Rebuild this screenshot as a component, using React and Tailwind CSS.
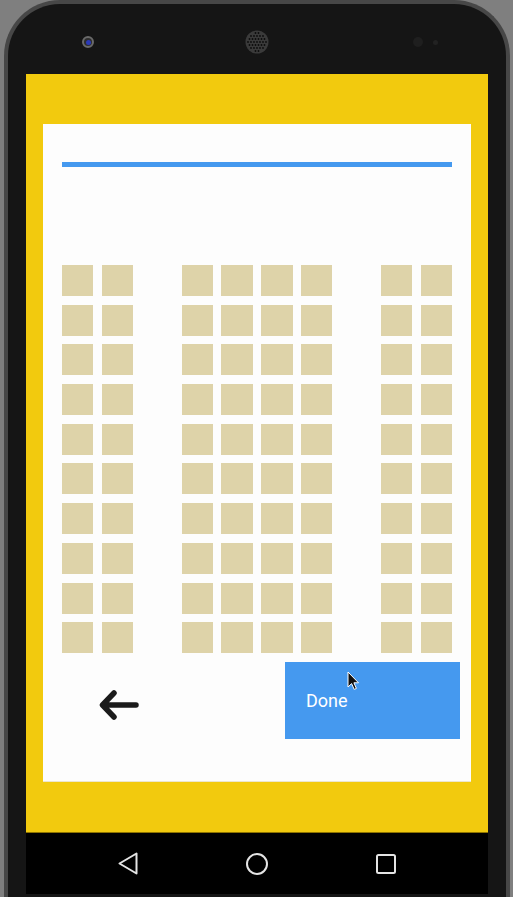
import React from "react";

const ROWS = 10;
const AISLES = [2, 7];

function Seat() {
  return <div className="h-[31px] bg-[#ded3a9]" />;
}

function SeatMap() {
  const cells = [];
  for (let r = 0; r < ROWS; r++) {
    for (let c = 0; c < 10; c++) {
      cells.push(
        AISLES.includes(c) ? <div key={r + "-" + c} /> : <Seat key={r + "-" + c} />
      );
    }
  }
  return <div className="grid grid-cols-10 gap-x-[8.7px] gap-y-[8.7px]">{cells}</div>;
}

function Grille() {
  const dots = [];
  for (let y = -9; y <= 9; y += 3) {
    for (let x = -9; x <= 9; x += 3) {
      const ox = (Math.round(y / 3) % 2) * 1.5;
      if ((x + ox) * (x + ox) + y * y < 95) dots.push(<circle key={x + "," + y} cx={12 + x + ox} cy={12 + y} r="0.9" fill="#0c0c0c" />);
    }
  }
  return (
    <svg width="24" height="24" viewBox="0 0 24 24">
      <circle cx="12" cy="12" r="11.5" fill="#3a3a3a" />
      {dots}
    </svg>
  );
}

function PhoneTop() {
  return (
    <div className="h-[70px] flex items-center pt-[6px]">
      <div className="ml-[56px] w-[12px] h-[12px] rounded-full bg-[#2e2e2e] border-[2px] border-[#6a6a6a] flex items-center justify-center">
        <div className="w-[5px] h-[5px] rounded-full bg-[#2b3ab8]" />
      </div>
      <div className="ml-[151px]">
        <Grille />
      </div>
      <div className="ml-[144px] w-[10px] h-[10px] rounded-full bg-[#1f1f1f]" />
      <div className="ml-[10px] w-[5px] h-[5px] rounded-full bg-[#222222]" />
    </div>
  );
}

function NavBar() {
  return (
    <div className="h-[62px] bg-black border-t border-[#8f7400] flex items-center justify-center gap-[108px]">
      <svg width="20" height="23" viewBox="0 0 20 23">
        <path d="M18.5 1.5 V21.5 L1.5 11.5 Z" fill="none" stroke="#e4e4e4" strokeWidth="2" strokeLinejoin="round" />
      </svg>
      <svg width="22" height="22" viewBox="0 0 22 22">
        <circle cx="11" cy="11" r="10" fill="none" stroke="#e4e4e4" strokeWidth="2" />
      </svg>
      <svg width="20" height="20" viewBox="0 0 20 20">
        <rect x="1" y="1" width="18" height="18" rx="1.5" fill="none" stroke="#e4e4e4" strokeWidth="2" />
      </svg>
    </div>
  );
}

export default function App() {
  return (
    <div className="w-[513px] h-[897px] bg-[#7f7f7f] overflow-hidden font-['Roboto',sans-serif]">
      <div className="ml-[4px] w-[506px] h-[920px] bg-[#151515] rounded-t-[56px] border-[4px] border-b-0 border-[#474747] px-[18px]">
        <PhoneTop />
        <div className="h-[758px] bg-[#f2ca0e] px-[17px] pt-[50px]">
          <div className="h-[658px] bg-[#fdfdfd] border-b border-[#ece6cf] px-[19px] pt-[38px]">
            <div className="h-[5px] bg-[#4599ef]" />
            <div className="mt-[98px]">
              <SeatMap />
            </div>
            <div className="mt-[9px] mr-[-8px] flex items-center justify-between">
              <div className="pl-[37px] pt-[9px]">
                <svg width="42" height="32" viewBox="0 0 42 32">
                  <path d="M4 16 H37 M15 4 L3.5 16 L15 28" fill="none" stroke="#1b1b1b" strokeWidth="5.5" strokeLinecap="round" strokeLinejoin="round" />
                </svg>
              </div>
              <button className="relative w-[175px] h-[77px] bg-[#4599ef] text-white text-[18px] text-left pl-[21px]">
                Done
                <svg className="absolute left-[62px] top-[9px]" width="13" height="20" viewBox="0 0 13 20">
                  <path d="M1 1 V16 L4.6 12.6 L7.2 18.4 L9.4 17.4 L6.9 11.8 L11.5 11.8 Z" fill="#111" stroke="#fff" strokeWidth="1" strokeLinejoin="round" />
                </svg>
              </button>
            </div>
          </div>
        </div>
        <NavBar />
      </div>
    </div>
  );
}
